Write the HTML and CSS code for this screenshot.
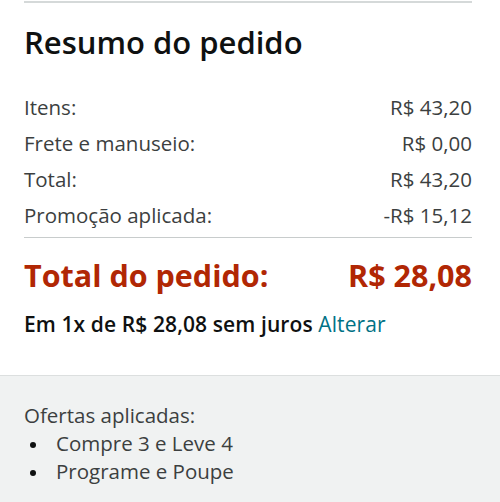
FILE: index.html
```html
<!DOCTYPE html>
<html lang="pt-BR">
<head>
<meta charset="utf-8">
<link rel="stylesheet" href="styles.css">
</head>
<body>
<div class="summary">
  <div class="inner">
    <h2 class="title">Resumo do pedido</h2>
    <div class="rows">
      <div class="row"><span>Itens:</span><span>R$ 43,20</span></div>
      <div class="row"><span>Frete e manuseio:</span><span>R$ 0,00</span></div>
      <div class="row"><span>Total:</span><span>R$ 43,20</span></div>
      <div class="row"><span>Promoção aplicada:</span><span>-R$ 15,12</span></div>
    </div>
    <div class="grand">
      <span>Total do pedido:</span><span>R$ 28,08</span>
    </div>
    <p class="install">Em 1x de R$ 28,08 sem juros <a class="link" href="#">Alterar</a></p>
  </div>
  <div class="offers">
    <p class="offers-title">Ofertas aplicadas:</p>
    <ul class="offers-list">
      <li>Compre 3 e Leve 4</li>
      <li>Programe e Poupe</li>
    </ul>
  </div>
</div>
</body>
</html>
```
FILE: styles.css
```css
html, body {
  margin: 0;
  padding: 0;
  background: #fff;
}
body {
  font-family: "Open Sans", "Noto Sans", sans-serif;
  color: #0f1111;
  width: 500px;
  height: 502px;
  overflow: hidden;
}
.inner {
  margin: 1px 28px 0 24px;
  border-top: 2px solid #d5d9d9;
  padding-top: 21px;
}
.title {
  margin: 0;
  font-size: 31px;
  font-weight: 600;
  line-height: 36px;
  color: #0f1111;
}
.rows {
  margin-top: 29px;
  padding-bottom: 4px;
  border-bottom: 1px solid #c8cccc;
}
.row {
  display: flex;
  justify-content: space-between;
  font-size: 20.5px;
  line-height: 36px;
  color: #3c3f3f;
}
.grand {
  display: flex;
  justify-content: space-between;
  margin-top: 17px;
  font-size: 30.5px;
  font-weight: 700;
  line-height: 40px;
  color: #b12704;
}
.install {
  margin: 17px 0 0;
  font-size: 21px;
  font-weight: 600;
  line-height: 24px;
  letter-spacing: 0.1px;
  color: #0f1111;
}
.link {
  color: #007185;
  font-weight: 400;
  text-decoration: none;
}
.offers {
  margin-top: 39px;
  border-top: 1px solid #dcdfdf;
  background: #f0f2f2;
  padding: 25px 24px 30px;
}
.offers-title {
  margin: 0;
  font-size: 20.5px;
  line-height: 28px;
  color: #3c3f3f;
}
.offers-list {
  margin: 0;
  padding: 0;
  list-style: none;
  font-size: 20.5px;
  line-height: 28px;
  color: #3c3f3f;
}
.offers-list li {
  display: flex;
  align-items: center;
}
.offers-list li::before {
  content: "";
  width: 6px;
  height: 6px;
  border-radius: 50%;
  background: #0f1111;
  margin: 3px 20px 0 6px;
  flex: none;
}
```
